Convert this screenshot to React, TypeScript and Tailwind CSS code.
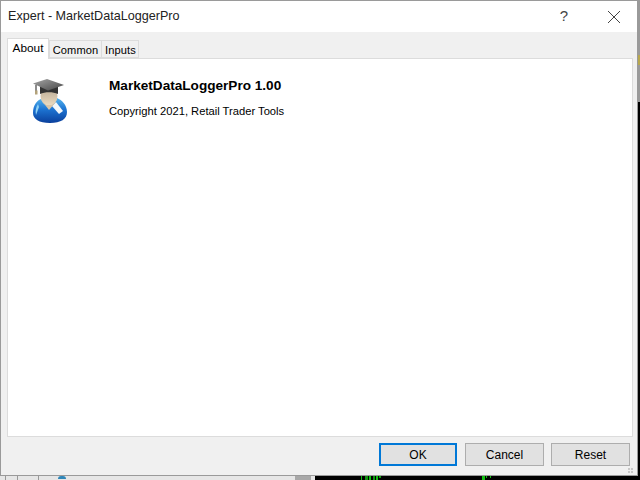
const Sans = "font-['Liberation_Sans',Arial,sans-serif]";

// graduate icon from the About page
function GraduateIcon() {
  return (
    <svg width="36" height="46" viewBox="0 0 36 46" className="block">
      <defs>
        <linearGradient id="suit" x1="0" y1="0" x2="0" y2="1">
          <stop offset="0" stopColor="#55b4ee" />
          <stop offset="0.45" stopColor="#1d74d2" />
          <stop offset="1" stopColor="#0a3f9c" />
        </linearGradient>
        <linearGradient id="face" x1="0" y1="0" x2="0" y2="1">
          <stop offset="0" stopColor="#b3a48e" />
          <stop offset="1" stopColor="#ecdcc2" />
        </linearGradient>
        <linearGradient id="cap" x1="0" y1="0" x2="1" y2="1">
          <stop offset="0" stopColor="#a6a6a6" />
          <stop offset="1" stopColor="#444444" />
        </linearGradient>
      </defs>
      <path d="M11 21C5 23 1 28 1 36C1 42 7 46 18 46C29 46 35 42 35 35C35 28 30 23 25 21L17 31Z" fill="url(#suit)" />
      <path d="M6 27C4 30 3 34 4 38L7 30Z" fill="#8fd2f5" />
      <path d="M20 29L24 25L31 34L27 37Z" fill="#f2f7fb" />
      <ellipse cx="17" cy="19" rx="8.5" ry="10" fill="url(#face)" />
      <path d="M10 24L17 33L24 25L20 28H14Z" fill="#d8c5a8" />
      <path d="M8 9L26 9L26 17C21 14.5 13 14.5 8 17Z" fill="#333333" />
      <path d="M1 6.5L15 2L32 8L16 13.5Z" fill="url(#cap)" />
      <path d="M4 8V14" stroke="#666" strokeWidth="1.5" />
      <rect x="3" y="13.5" width="2.5" height="4" fill="#b3a27a" />
    </svg>
  );
}

function Tab({ label, active, width }: { label: string; active?: boolean; width: string }) {
  if (active) {
    return (
      <div className={`${width} relative z-10 h-[21px] border border-b-0 border-[#dcdcdc] bg-white pt-[2px] text-center text-[11.8px] leading-[15px] text-black`}>
        {label}
      </div>
    );
  }
  return (
    <div className={`${width} mt-[2px] h-[18px] border border-[#dcdcdc] bg-[#f0f0f0] pt-[2px] text-center text-[11.1px] tracking-[0.1px] leading-[15px] text-black`}>
      {label}
    </div>
  );
}

function Btn({ label, focused }: { label: string; focused?: boolean }) {
  return (
    <div
      className={
        focused
          ? "mr-[1px] flex h-[23px] w-[78px] items-center justify-center border-2 border-[#0078d7] bg-[#e1e1e1] text-[12px] text-black"
          : "flex h-[23px] w-[79px] items-center justify-center border border-[#adadad] bg-[#e1e1e1] text-[12px] text-black"
      }
    >
      {label}
    </div>
  );
}

function SizeGrip() {
  return (
    <div className="grid grid-cols-2 gap-[1px]">
      <div className="h-[2px] w-[2px] bg-[#c8c8c8]" />
      <div className="h-[2px] w-[2px] bg-[#c8c8c8]" />
      <div className="h-[2px] w-[2px] bg-[#c8c8c8]" />
      <div className="h-[2px] w-[2px] bg-[#c8c8c8]" />
    </div>
  );
}

export default function App() {
  return (
    <div className={`${Sans} flex h-[480px] w-[640px] flex-col overflow-hidden bg-black`}>
      <div className="flex h-[476px] w-[640px]">
        <div className="flex h-[476px] w-[638px] flex-col border border-[#9a9a9a] bg-[#f0f0f0]">
          <div className="flex h-[31px] shrink-0 items-center bg-white pl-[7px]">
            <span className="text-[12.6px] text-[#222]">Expert - MarketDataLoggerPro</span>
            <span className="ml-auto mr-[39px] text-[15px] text-[#444]">?</span>
            <svg width="14" height="14" viewBox="0 0 14 14" className="mr-[16px]">
              <path d="M1 1L13 13M13 1L1 13" stroke="#444" strokeWidth="1" />
            </svg>
          </div>
          <div className="flex flex-1 flex-col pl-[6px] pr-[4px] pt-[6px]">
            <div className="-mb-px flex items-start">
              <Tab label="About" active width="w-[42px]" />
              <Tab label="Common" width="w-[53px]" />
              <Tab label="Inputs" width="w-[38px] -ml-px pl-[1px]" />
            </div>
            <div className="flex h-[379px] items-start border border-[#dcdcdc] bg-white pl-[24px] pt-[18px]">
              <GraduateIcon />
              <div className="ml-[41px] text-black">
                <div className="pt-[1px] text-[13.6px] font-bold leading-[16px]">MarketDataLoggerPro 1.00</div>
                <div className="mt-[10px] text-[11.2px] leading-[15px]">Copyright 2021, Retail Trader Tools</div>
              </div>
            </div>
            <div className="mt-[6px] flex justify-end gap-[7px] pr-[3px]">
              <Btn label="OK" focused />
              <Btn label="Cancel" />
              <Btn label="Reset" />
            </div>
            <div className="flex justify-end pt-[2px]">
              <SizeGrip />
            </div>
          </div>
        </div>
        <div className="flex w-[2px] flex-col">
          <div className="h-[55px] bg-[#9a9a9a]" />
          <div className="h-[10px] bg-[#b8a84e]" />
          <div className="h-[37px] bg-[#9a9a9a]" />
        </div>
      </div>
      <div className="flex h-[4px] items-stretch">
        <div className="flex w-[315px] bg-[#e6e6e6]">
          <div className="ml-[5px] w-px bg-[#999]" />
          <div className="ml-[11px] w-px bg-[#999]" />
          <div className="ml-[20px] w-px bg-[#999]" />
          <div className="ml-[19px] h-[3px] w-[8px] rounded-t-full bg-[#2f86b8]" />
          <div className="ml-[229px] w-[16px] bg-[#a8a8a8]" />
        </div>
        <div className="ml-[46px] flex gap-px">
          <div className="w-px bg-[#10c010]" />
          <div className="ml-[2px] w-[3px] bg-[#109010]" />
          <div className="w-[2px] bg-[#10c010]" />
          <div className="ml-[1px] w-[2px] bg-[#109010]" />
          <div className="w-[2px] bg-[#10c010]" />
          <div className="h-[2px] w-[2px] bg-[#10a010]" />
        </div>
        <div className="ml-[101px] flex gap-px">
          <div className="w-[3px] bg-[#10c010]" />
          <div className="h-[2px] w-px bg-[#10c010]" />
          <div className="ml-[2px] h-[2px] w-px bg-[#10c010]" />
        </div>
      </div>
    </div>
  );
}
